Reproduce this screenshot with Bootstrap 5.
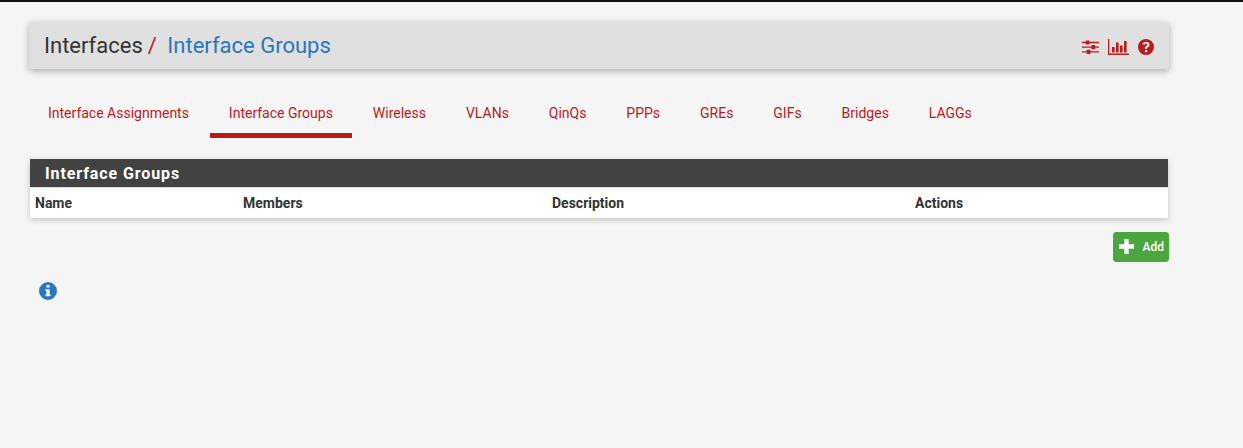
<!DOCTYPE html>
<html lang="en">
<head>
    <meta charset="UTF-8">
    <title>Interface Groups</title>
    <link rel="stylesheet" href="https://cdn.jsdelivr.net/npm/bootstrap@5.3.0/dist/css/bootstrap.min.css">
    <style>
        body {
            background-color: #f5f5f5;
            border-top: 2px solid #111;
            color: #333;
            font-family: Roboto, "Liberation Sans", sans-serif;
            font-size: 14px;
        }
        .page-wrap {
            width: 1140px;
            margin-left: 29px;
            padding-top: 20px;
        }
        .crumb-bar {
            height: 47px;
            background-color: #e0e0e0;
            padding: 2px 15px 0 15px;
            box-shadow: 0 2px 7px rgba(0, 0, 0, .3);
            border-radius: 2px;
        }
        .crumb-bar h1 {
            font-size: 22px;
            font-weight: 400;
            margin: 0;
            color: #333;
        }
        .crumb-sep { color: #b71c1c; margin: 0 5px 0 5px; }
        .crumb-now { color: #2a77bd; }
        .bar-icons { gap: 9px; }
        .bar-icon { display: block; fill: #b71c1c; }
        .tab-row { margin-top: 23px; gap: 1.950px; }
        .tab-row .nav-link {
            color: #b71c1c;
            font-size: 14px;
            line-height: 20px;
            padding: 11px 19px 10px;
            border-bottom: 5px solid transparent;
        }
        .tab-row .nav-link.active { border-bottom-color: #b71c1c; }
        .group-panel {
            margin: 21px 1px 0;
            background-color: #fff;
            box-shadow: 0 2px 6px rgba(0, 0, 0, .2);
        }
        .group-head {
            height: 28px;
            background-color: #424242;
            color: #fff;
            font-size: 16px;
            font-weight: 700;
            letter-spacing: .9px;
            line-height: 29px;
            padding-left: 15px;
        }
        .group-table { table-layout: fixed; width: 100%; margin: 0; }
        .group-table th {
            height: 30px;
            padding: 2px 5px 0;
            font-size: 14px;
            font-weight: 700;
            color: #333;
            vertical-align: middle;
            border: 0;
            border-top: 1px solid #ddd;
        }
        .add-btn {
            width: 56px;
            height: 30px;
            margin-top: 14px;
            padding: 0 4px 0 5px;
            background-color: #4aa63f;
            border-color: #4aa63f;
            color: #fff;
            font-size: 12px;
            font-weight: 500;
            border-radius: 3px;
        }
        .add-btn:hover { background-color: #43993a; color: #fff; }
        .info-mark { display: block; margin: 20px 0 0 10px; fill: #2a77bd; }
    </style>
</head>
<body>
    <div class="page-wrap">
        <div class="crumb-bar d-flex align-items-center justify-content-between">
            <h1>Interfaces<span class="crumb-sep">/</span> <span class="crumb-now">Interface Groups</span></h1>
            <div class="bar-icons d-flex align-items-center">
                <svg class="bar-icon" width="17" height="16" viewBox="0 0 18 16">
                    <path d="M0 2.500h18v1.400H0zM0 7.500h18v1.400H0zM0 12.500h18v1.400H0z"/>
                    <rect x="4" y="1" width="4" height="4.400" rx=".6"/>
                    <rect x="10" y="6" width="4" height="4.400" rx=".6"/>
                    <rect x="5" y="11" width="4" height="4.400" rx=".6"/>
                </svg>
                <svg class="bar-icon" width="21" height="16" viewBox="0 0 21 16">
                    <path d="M0 0h1.300v14.500H21V16H0z"/>
                    <rect x="4" y="8" width="2.600" height="5.500"/>
                    <rect x="8" y="3.500" width="2.600" height="10"/>
                    <rect x="12" y="6.500" width="2.600" height="7"/>
                    <rect x="16" y="2" width="2.600" height="11.500"/>
                </svg>
                <svg class="bar-icon" width="16" height="16" viewBox="0 0 16 16">
                    <path fill-rule="evenodd" d="M8 0a8 8 0 1 1 0 16A8 8 0 0 1 8 0zM6.900 11v2.300h2.300V11zM8.100 2.800c-1.900 0-3.100.9-3.600 2.300l1.700.8c.3-.8.9-1.200 1.700-1.200.8 0 1.300.4 1.300 1 0 .6-.4.9-1.100 1.400-.9.6-1.200 1.200-1.200 2.200v.5h2.200v-.3c0-.5.2-.8.9-1.200 1-.7 1.600-1.400 1.600-2.700 0-1.700-1.300-2.800-3.200-2.800z"/>
                </svg>
            </div>
        </div>

        <ul class="nav tab-row">
            <li class="nav-item"><a class="nav-link" href="#">Interface Assignments</a></li>
            <li class="nav-item"><a class="nav-link active" href="#">Interface Groups</a></li>
            <li class="nav-item"><a class="nav-link" href="#">Wireless</a></li>
            <li class="nav-item"><a class="nav-link" href="#">VLANs</a></li>
            <li class="nav-item"><a class="nav-link" href="#">QinQs</a></li>
            <li class="nav-item"><a class="nav-link" href="#">PPPs</a></li>
            <li class="nav-item"><a class="nav-link" href="#">GREs</a></li>
            <li class="nav-item"><a class="nav-link" href="#">GIFs</a></li>
            <li class="nav-item"><a class="nav-link" href="#">Bridges</a></li>
            <li class="nav-item"><a class="nav-link" href="#">LAGGs</a></li>
        </ul>

        <div class="group-panel">
            <div class="group-head">Interface Groups</div>
            <table class="table group-table">
                <colgroup>
                    <col width="208"><col width="309"><col width="363"><col>
                </colgroup>
                <thead>
                    <tr>
                        <th>Name</th>
                        <th>Members</th>
                        <th>Description</th>
                        <th>Actions</th>
                    </tr>
                </thead>
            </table>
        </div>

        <div class="d-flex justify-content-end">
            <button class="btn add-btn d-flex align-items-center justify-content-between" type="button">
                <svg width="15" height="15" viewBox="0 0 15 15" fill="#fff"><path d="M5.300 0h4.400v5.300H15v4.400H9.700V15H5.300V9.700H0V5.300h5.300z"/></svg>
                <span>Add</span>
            </button>
        </div>

        <svg class="info-mark" width="18" height="18" viewBox="0 0 18 18">
            <path fill-rule="evenodd" d="M9 0a9 9 0 1 1 0 18A9 9 0 0 1 9 0zM7.400 3v2.600h3.200V3zM6.400 7.200v1.700h1v3.700h-1v1.700h5.200v-1.700h-1V7.200z"/>
        </svg>
    </div>
    <script src="https://cdn.jsdelivr.net/npm/bootstrap@5.3.0/dist/js/bootstrap.bundle.min.js"></script>
</body>
</html>
